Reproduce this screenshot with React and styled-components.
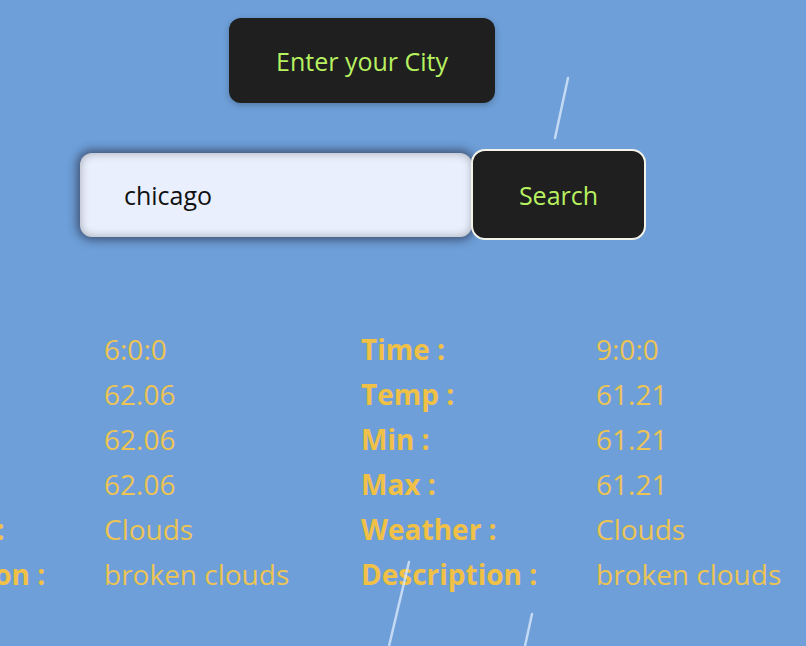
import React, { useState } from 'react';
import styled, { createGlobalStyle } from 'styled-components';

const GlobalStyle = createGlobalStyle`
  html, body {
    margin: 0;
    padding: 0;
    background: #6d9fd7;
    overflow: hidden;
    font-family: "Open Sans", "Noto Sans", sans-serif;
  }
`;

const Page = styled.div`
  position: relative;
  width: 806px;
  height: 646px;
  overflow: hidden;
  background: #6e9fd8;
`;

const Rain = styled.svg`
  position: absolute;
  inset: 0;
  pointer-events: none;
`;

const Top = styled.div`
  width: 724px;
  display: flex;
  flex-direction: column;
  align-items: center;
  padding-top: 18px;
`;

const Title = styled.div`
  width: 266px;
  height: 85px;
  box-sizing: border-box;
  display: flex;
  align-items: center;
  justify-content: center;
  background: #1f1f1f;
  color: #b8f160;
  font-size: 25px;
  border-radius: 12px;
  box-shadow: 0 2px 6px rgba(0, 0, 0, 0.25);
`;

const SearchRow = styled.div`
  display: flex;
  align-items: center;
  margin-top: 46px;
  margin-left: 2px;
`;

const Input = styled.input`
  width: 392px;
  height: 84px;
  box-sizing: border-box;
  border: none;
  outline: none;
  border-radius: 12px;
  background: #e9effd;
  padding: 0 0 0 44px;
  font-family: inherit;
  font-size: 25px;
  color: #111;
  box-shadow: 0 0 10px 3px rgba(30, 30, 50, 0.6), inset 0 0 10px rgba(0, 0, 0, 0.3);
`;

const Button = styled.button`
  width: 175px;
  height: 91px;
  box-sizing: border-box;
  margin-left: -1px;
  border: 2px solid #f3f3ea;
  border-radius: 14px;
  background: #1f1f1f;
  color: #b8f160;
  font-family: inherit;
  font-size: 25px;
  cursor: pointer;
`;

const Data = styled.div`
  display: flex;
  margin-top: 86px;
  margin-left: -131px;
`;

const Card = styled.div`
  display: grid;
  grid-template-columns: 235px ${p => p.$last ? 'auto' : '257px'};
  grid-auto-rows: 45px;
  align-items: center;
  color: #f0c146;
  font-size: 28px;
`;

const Label = styled.div`
  font-weight: 700;
  white-space: nowrap;
`;

const Value = styled.div`
  color: #ecc455;
  white-space: nowrap;
`;

const cards = [
  { time: '6:0:0', temp: '62.06', min: '62.06', max: '62.06', weather: 'Clouds', desc: 'broken clouds' },
  { time: '9:0:0', temp: '61.21', min: '61.21', max: '61.21', weather: 'Clouds', desc: 'broken clouds' },
];

const rows = [
  ['Time :', 'time'],
  ['Temp :', 'temp'],
  ['Min :', 'min'],
  ['Max :', 'max'],
  ['Weather :', 'weather'],
  ['Description :', 'desc'],
];

export default function App() {
  const [city, setCity] = useState('chicago');
  return (
    <Page>
      <GlobalStyle />
      <Rain width="806" height="646">
        <g stroke="rgba(225,236,252,0.75)" strokeWidth="2.5" strokeLinecap="round">
          <line x1="568" y1="78" x2="555" y2="138" />
          <line x1="409" y1="562" x2="389" y2="646" />
          <line x1="532" y1="614" x2="525" y2="646" />
        </g>
      </Rain>
      <Top>
        <Title>Enter your City</Title>
        <SearchRow>
          <Input value={city} onChange={e => setCity(e.target.value)} />
          <Button>Search</Button>
        </SearchRow>
      </Top>
      <Data>
        {cards.map((c, i) => (
          <Card key={i} $last={i === cards.length - 1}>
            {rows.map(([label, key]) => (
              <React.Fragment key={key}>
                <Label>{label}</Label>
                <Value>{c[key]}</Value>
              </React.Fragment>
            ))}
          </Card>
        ))}
      </Data>
    </Page>
  );
}
